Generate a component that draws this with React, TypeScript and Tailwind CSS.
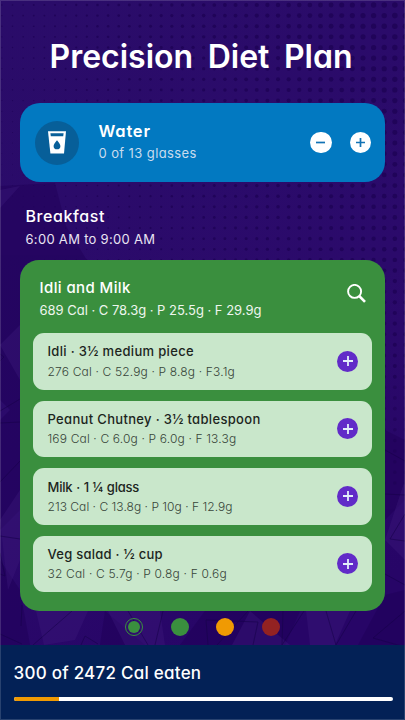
import type { ReactNode } from "react";

const foods = [
  { name: "Idli · 3½ medium piece", facts: "276 Cal · C 52.9g · P 8.8g · F3.1g", nameCls: "tracking-[0.33px]", factsCls: "leading-[21px] tracking-[0.16px]" },
  { name: "Peanut Chutney · 3½ tablespoon", facts: "169 Cal · C 6.0g · P 6.0g · F 13.3g", nameCls: "tracking-[0.33px]", factsCls: "leading-[20px] tracking-[0.15px]" },
  { name: "Milk · 1 ¼ glass", facts: "213 Cal · C 13.8g · P 10g · F 12.9g", nameCls: "tracking-[-0.2px] [word-spacing:0.5px]", factsCls: "leading-[20px] tracking-[0.03px]" },
  { name: "Veg salad · ½ cup", facts: "32 Cal · C 5.7g · P 0.8g · F 0.6g", nameCls: "tracking-[0.26px]", factsCls: "leading-[20px] tracking-[0.18px]" },
];

const PITCH = 10.62;
const dots: { x: number; y: number; r: number; o: number }[] = [];
for (let row = 0; row < 46; row++) {
  for (let col = 0; col < 39; col++) {
    const x = 1.9 + col * PITCH;
    const y = 5 + row * PITCH;
    const r = 0.75 + (x / 405) * 2.1 - (y / 480) * 1.1;
    if (r > 0.35) dots.push({ x, y, r, o: y > 380 ? 0.45 : 0.7 });
  }
}

// Faceted low-poly shading with a halftone dot grid.
function Backdrop() {
  return (
    <svg className="absolute inset-0 h-full w-full" viewBox="0 0 405 720" preserveAspectRatio="none" aria-hidden="true">
      <defs>
        <linearGradient id="base" x1="0" y1="0" x2="0.3" y2="1">
          <stop offset="0" stopColor="#2a0c69" />
          <stop offset="0.6" stopColor="#2b0a6b" />
          <stop offset="1" stopColor="#270567" />
        </linearGradient>
      </defs>
      <rect width="405" height="720" fill="url(#base)" />
      <g fill="#1f0058" opacity="0.5">
        <polygon points="0,186 55,183 66,226 88,262 0,275" />
        <polygon points="0,270 20,262 20,420 0,400" />
        <polygon points="0,420 20,400 20,510 0,530" />
        <polygon points="0,560 20,590 30,645 0,645" />
        <polygon points="105,611 145,645 100,645" />
        <polygon points="205,611 300,611 285,645 180,645" />
        <polygon points="385,430 405,440 405,500 385,520" />
        <polygon points="385,595 405,590 405,645 358,645" />
      </g>
      <g fill="#3d1a7c" opacity="0.38">
        <polygon points="36,611 88,611 75,640 44,645" />
        <polygon points="0,190 20,186 0,208" />
        <polygon points="0,345 20,325 20,380" />
        <polygon points="0,520 20,490 20,560 8,590" />
        <polygon points="108,611 125,645 165,645 160,611" />
        <polygon points="306,611 350,611 335,645 310,645" />
        <polygon points="385,540 405,480 405,560" />
        <polygon points="232,645 250,611 290,645" />
      </g>
      {dots.map((d, i) => (
        <circle key={i} cx={d.x} cy={d.y} r={d.r} fill="#1d0252" opacity={d.o} />
      ))}
      <g fill="none" stroke="#17024a" strokeWidth="0.8" opacity="0.7">
        <path d="M0 354L4 357L0 361M0 411L20 399M0 423L20 422M0 482L20 461M0 536L20 539M0 553L5 576L0 574" />
        <path d="M385 450L405 461M385 494L405 495M405 514L390 539L405 541M385 574L405 585" />
        <path d="M22 605L21 626M33 645L72 611M0 634L22 644M81 645L85 636L98 644M128 611L148 645M163 611L155 645M208 645L206 620L258 622L253 645M283 611L282 645L304 611M217 645L248 611M326 611L336 645L356 611M405 611L373 638L405 647" />
      </g>
    </svg>
  );
}

function RoundButton({ label, className, children }: { label: string; className: string; children: ReactNode }) {
  return (
    <button type="button" aria-label={label} className={`flex shrink-0 items-center justify-center rounded-full ${className}`}>
      {children}
    </button>
  );
}

function GlassIcon() {
  return (
    <svg width="18" height="23" viewBox="0 0 18 23" aria-hidden="true">
      <path d="M0 0.3H18L16 22.5H2.4Z" fill="#fff" />
      <path d="M2.4 2.3H15.6L15.2 5.3H2.8Z" fill="#075f99" />
      <path d="M9 9.2C10.6 11.4 12.4 13.2 12.4 14.9A3.4 3.4 0 0 1 5.6 14.9C5.6 13.2 7.4 11.4 9 9.2Z" fill="#075f99" />
    </svg>
  );
}

export default function App() {
  return (
    <main className="relative h-[720px] w-[405px] overflow-hidden whitespace-nowrap bg-[#2a0a69] font-['Inter',sans-serif] text-white [font-feature-settings:'cv11']">
      <Backdrop />
      <div className="relative flex h-full flex-col">
        <h1 className="flex h-[103px] pt-[36px] pl-[49.5px] text-[32px] leading-[42px] font-semibold [word-spacing:6.5px]">Precision Diet Plan</h1>

        <section className="ml-[19.5px] flex h-[79px] w-[365.5px] items-center rounded-[20px] bg-[#0279c1] pr-[14px] pl-[15.5px]">
          <div className="flex size-[44px] items-center justify-center rounded-full bg-[#075f99]">
            <GlassIcon />
          </div>
          <div className="ml-[19.5px] flex-1 pb-[3px]">
            <h2 className="text-[16.5px] leading-[24px] font-semibold tracking-[0.8px]">Water</h2>
            <p className="text-[13px] leading-[20px] tracking-[0.4px] text-[#c9dcee]">0 of 13 glasses</p>
          </div>
          <RoundButton label="Remove a glass" className="mr-[18px] size-[21.5px] bg-white">
            <svg width="9" height="9" viewBox="0 0 9 9" stroke="#1273b5" strokeWidth="1.7"><path d="M0 4.5H9" /></svg>
          </RoundButton>
          <RoundButton label="Add a glass" className="size-[21.5px] bg-white">
            <svg width="9" height="9" viewBox="0 0 9 9" stroke="#1273b5" strokeWidth="1.7"><path d="M0 4.5H9M4.5 0V9" /></svg>
          </RoundButton>
        </section>

        <header className="h-[78px] pt-[22px] pl-[25.5px]">
          <h2 className="text-[16px] leading-[24px] font-medium tracking-[0.6px]">Breakfast</h2>
          <p className="text-[13px] leading-[23px] tracking-[0.3px] text-[#e9e4f2]">6:00 AM to 9:00 AM</p>
        </header>

        <section className="ml-[19.5px] flex h-[351px] w-[365.5px] flex-col rounded-[19px] bg-[#3a8f3e] px-[13px]">
          <div className="flex h-[73px] justify-between pt-[16px] pr-[6.5px] pl-[7px]">
            <div>
              <h3 className="text-[15px] leading-[23px] font-medium tracking-[0.4px]">Idli and Milk</h3>
              <p className="text-[13px] leading-[23px] tracking-[-0.02px] text-[#eef6ee]">689 Cal · C 78.3g · P 25.5g · F 29.9g</p>
            </div>
            <svg className="mt-[7.5px]" width="19" height="19" viewBox="0 0 19 19" fill="none" stroke="#fff" aria-label="Search">
              <circle cx="7.6" cy="7.4" r="6.5" strokeWidth="1.9" />
              <path d="M12.2 12L18 17.8" strokeWidth="2.6" />
            </svg>
          </div>
          <ul className="flex flex-col gap-[11px]">
            {foods.map((food) => (
              <li key={food.name} className="flex h-[56.5px] items-center justify-between rounded-[11px] bg-[#c9e7cb] pr-[14px] pl-[15px]">
                <div className="pt-px">
                  <p className={`text-[13px] leading-[20px] font-medium text-[#1c251d] ${food.nameCls}`}>{food.name}</p>
                  <p className={`text-[12px] font-light text-[#374539] ${food.factsCls}`}>{food.facts}</p>
                </div>
                <RoundButton label={`Add ${food.name}`} className="size-[21px] bg-[#612bc8]">
                  <svg width="10" height="10" viewBox="0 0 10 10" stroke="#e3effa" strokeWidth="1.8"><path d="M0 5H10M5 0V10" /></svg>
                </RoundButton>
              </li>
            ))}
          </ul>
        </section>

        <div className="flex h-[33.5px] gap-[27.4px] pt-[7px] pl-[125.4px]">
          <span className="flex size-[18px] items-center justify-center rounded-full border-[1.5px] border-[#3a8f3e]">
            <span className="size-[12px] rounded-full bg-[#3a8f3e]" />
          </span>
          <span className="size-[18px] rounded-full bg-[#3a8f3e]" />
          <span className="size-[18px] rounded-full bg-[#f09a03]" />
          <span className="size-[18px] rounded-full bg-[#932222]" />
        </div>

        <footer className="flex-1 bg-[#032156] pt-[15.5px] pr-[12.5px] pl-[13.5px]">
          <p className="text-[17px] leading-[26px] font-medium tracking-[0.25px]">300 of 2472 Cal eaten</p>
          <div className="mt-[10.5px] h-[4px] overflow-hidden rounded-full bg-white">
            <div className="h-full w-[45.5px] bg-[#f09a03]" />
          </div>
        </footer>
      </div>
      <div className="pointer-events-none absolute inset-0 border border-white/15" />
    </main>
  );
}
